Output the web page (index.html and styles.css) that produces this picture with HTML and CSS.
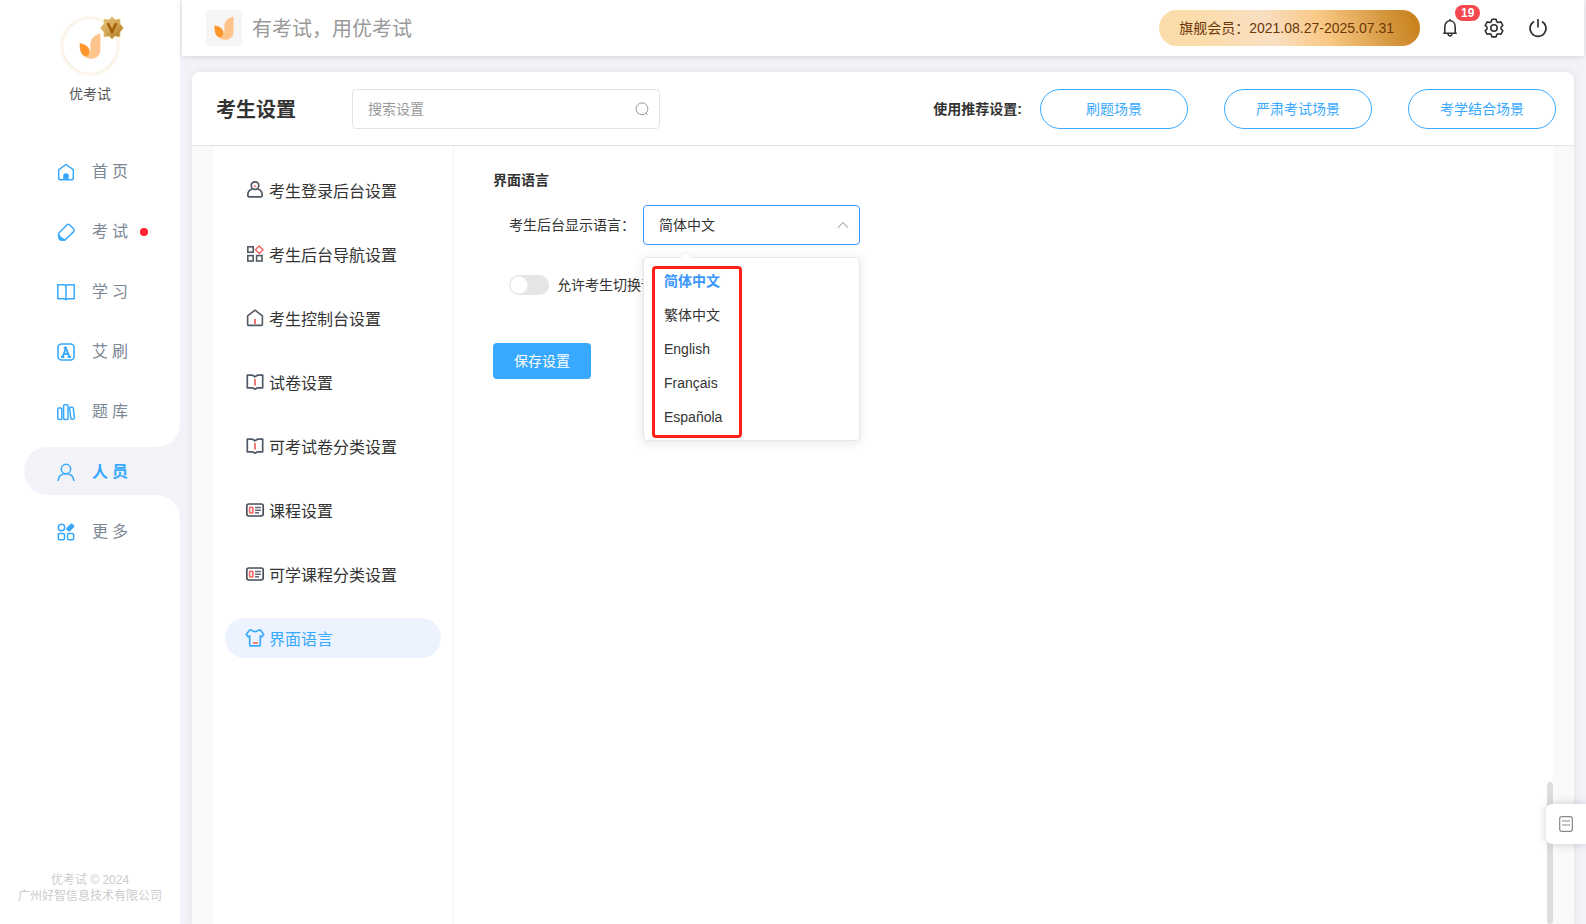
FILE: index.html
```html
<!DOCTYPE html>
<html lang="zh-CN">
<head>
<meta charset="utf-8">
<meta name="viewport" content="width=device-width, initial-scale=1">
<title>优考试 - 考生设置</title>
<link rel="stylesheet" href="styles.css">
</head>
<body>
<svg class="defs" aria-hidden="true">
  <symbol id="logo" viewBox="0 0 20 24">
    <path fill="#ffc48c" d="M19.600.4C13.500 2 10.300 5.500 10.300 11v5c0 3.500-2.500 5.500-5.800 5.300 1.700 1.700 3.800 2.500 6.500 2.500 5.300 0 8.600-3.400 8.600-8.800z"/>
    <path fill="#ff962c" d="M.5 9.500c5 .5 9.100 3.500 9.100 7.800 0 3.200-2.300 4.800-4.900 3.900C1.500 20 .3 15 .5 9.500z"/>
  </symbol>
  <symbol id="book" viewBox="0 0 18 18">
    <path fill="none" stroke="#515966" stroke-width="1.700" stroke-linejoin="round" d="M1.300 2.200h5.200L9 3.800l2.500-1.600h5.200v12.600h-5.200L9 16.200l-2.500-1.400H1.300z"/>
    <path stroke="#f0625d" stroke-width="1.700" d="M9 6v6.500"/>
  </symbol>
  <symbol id="card" viewBox="0 0 18 18">
    <rect x=".8" y="3" width="16.400" height="12" rx="2" fill="none" stroke="#454c59" stroke-width="1.700"/>
    <rect x="3.600" y="6.200" width="3.300" height="5.800" rx=".8" fill="none" stroke="#f0625d" stroke-width="1.600"/>
    <path d="M9 6.500h6M9 9.200h6M9 11.800h4" stroke="#656c78" stroke-width="1.400"/>
  </symbol>
</svg>
<div class="app">
  <aside class="sidebar">
    <div class="avatar">
      <svg class="avatar-logo"><use href="#logo"/></svg>
      <svg class="vip" viewBox="0 0 24 24">
        <defs><linearGradient id="gold" x1="0" y1="0" x2="1" y2="1"><stop offset="0" stop-color="#e6c583"/><stop offset=".5" stop-color="#d5a452"/><stop offset="1" stop-color="#a66d18"/></linearGradient></defs>
        <path fill="url(#gold)" stroke="#e5c47f" stroke-width=".8" stroke-linejoin="round" d="M12 .8l3 3.100 4.900-.8.100 4.600 3.400 4.300-3.400 4.300-.1 4.600-4.900-.8-3 3.100-3-3.100-4.900.8-.1-4.600L.6 12 4 7.700l.1-4.600 4.900.8z"/>
        <path fill="none" stroke="#a15d05" stroke-width="2.400" d="M7.800 7.200L12 16l4.200-8.800"/>
      </svg>
    </div>
    <div class="org">优考试</div>
    <nav class="menu" aria-label="主导航">
      <a class="menu-item" href="#home">
        <svg viewBox="0 0 20 20"><path fill="none" stroke="#38a9ff" stroke-width="1.500" stroke-linejoin="round" d="M10 2.500L2.700 7.600v8.400q0 1.800 1.800 1.800h11q1.800 0 1.800-1.800V7.600z"/><path fill="#38a9ff" d="M7.200 17.800V14a2.800 2.800 0 0 1 5.600 0v3.800z"/></svg>
        <span class="menu-text">首页</span></a>
      <a class="menu-item" href="#exam">
        <svg viewBox="0 0 20 20"><path fill="none" stroke="#38a9ff" stroke-width="1.500" stroke-linejoin="round" d="M3 11L10.800 3q1.500-1.400 3 0L17.700 7q1.200 1.300 0 2.600L9.600 17.500Q7 19 4 17.600 1.500 14 3 11z"/><path fill="#38a9ff" d="M2.800 10.500q.5 4.500 6.700 6.900-2.800 1.900-5.600.5Q1.200 14.500 2.800 10.500z"/></svg>
        <span class="menu-text">考试</span><i class="dot"></i></a>
      <a class="menu-item" href="#study">
        <svg viewBox="0 0 20 20"><path fill="none" stroke="#38a9ff" stroke-width="1.500" stroke-linejoin="round" d="M1.800 2.800h5.700q2 0 2.500 1 .5-1 2.500-1h5.700v14h-5.700q-2 0-2.500 1-.5-1-2.500-1H1.800zM10 3.800v14"/></svg>
        <span class="menu-text">学习</span></a>
      <a class="menu-item" href="#ai">
        <svg viewBox="0 0 20 20"><rect x="2" y="2" width="16" height="16" rx="3.500" fill="none" stroke="#38a9ff" stroke-width="1.600"/><path fill="none" stroke="#38a9ff" stroke-width="1.900" d="M6.500 15L10 6l3.500 9M7.500 12h5M5 15h3.300M11.700 15H15M7.800 5.800h2.700"/></svg>
        <span class="menu-text">艾刷</span></a>
      <a class="menu-item" href="#bank">
        <svg viewBox="0 0 20 20"><g fill="none" stroke="#38a9ff" stroke-width="1.500"><rect x="1.800" y="6" width="4" height="11.500" rx="1"/><rect x="7.600" y="2.800" width="4.400" height="14.700" rx="1"/><rect x="14.200" y="5.200" width="3.600" height="12" rx="1" transform="rotate(-7 16 11)"/></g></svg>
        <span class="menu-text">题库</span></a>
      <a class="menu-item active" href="#people" aria-current="page">
        <svg viewBox="0 0 20 20"><g fill="none" stroke="#38a9ff" stroke-width="1.500" stroke-linecap="round"><circle cx="10" cy="7" r="4.700"/><path d="M2.200 18.300c.5-4.200 3.600-6.500 7.800-6.500s7.300 2.300 7.800 6.500"/></g></svg>
        <span class="menu-text">人员</span></a>
      <a class="menu-item" href="#more">
        <svg viewBox="0 0 20 20"><g fill="none" stroke="#38a9ff" stroke-width="1.500"><circle cx="5.500" cy="5.500" r="3.200"/><rect x="2.300" y="11.500" width="6.200" height="6.200" rx="1.200"/><rect x="11.500" y="11.500" width="6.200" height="6.200" rx="1.200"/></g><rect x="10.200" y="3.200" width="8.200" height="4.800" rx="1.200" fill="#38a9ff" transform="rotate(-45 14.300 5.600)"/></svg>
        <span class="menu-text">更多</span></a>
    </nav>
    <footer class="copyright">优考试 © 2024<br>广州好智信息技术有限公司</footer>
  </aside>

  <div class="main">
    <header class="topbar">
      <span class="brand-logo"><svg><use href="#logo"/></svg></span>
      <span class="slogan">有考试，用优考试</span>
      <span class="member">旗舰会员：2021.08.27-2025.07.31</span>
      <div class="tools">
        <button class="tool" aria-label="通知">
          <svg viewBox="0 0 20 20"><g fill="none" stroke="#333" stroke-width="1.600" stroke-linejoin="round"><path d="M3.200 15.300h13.600M4.800 15.200V9C4.800 5.200 7 2.800 10 2.800s5.200 2.400 5.200 6.200v6.200M10 2.800V1"/><path d="M8 16q.3 1.900 2 1.900t2-1.900"/></g></svg>
          <span class="count">19</span>
        </button>
        <button class="tool" aria-label="设置">
          <svg viewBox="0 0 20 20"><g fill="none" stroke="#333" stroke-width="1.600" stroke-linejoin="round"><path d="M8 1.200h4l.8 2.500 1.400.8 2.600-.6 2 3.500-1.800 1.900v1.600l1.800 1.900-2 3.500-2.600-.6-1.400.8-.8 2.400H8l-.8-2.400-1.400-.8-2.600.6-2-3.500L3 10.900V9.300L1.200 7.400l2-3.500 2.600.6 1.400-.8z"/><circle cx="10" cy="10" r="3.200"/></g></svg>
        </button>
        <button class="tool" aria-label="退出">
          <svg viewBox="0 0 20 20"><path fill="none" stroke="#333" stroke-width="1.700" d="M10 1v8.500M6 3.400a8 8 0 1 0 8 0"/></svg>
        </button>
      </div>
    </header>

    <main class="panel">
      <div class="panel-head">
        <h1>考生设置</h1>
        <label class="search">
          <input type="text" placeholder="搜索设置" aria-label="搜索设置">
          <svg viewBox="0 0 14 14"><g fill="none" stroke="#999" stroke-width="1"><circle cx="7" cy="6.800" r="5.900"/><path d="M10.800 11l2 2"/></g></svg>
        </label>
        <div class="presets">
          <span class="presets-label">使用推荐设置:</span>
          <button class="preset">刷题场景</button>
          <button class="preset">严肃考试场景</button>
          <button class="preset">考学结合场景</button>
        </div>
      </div>
      <div class="panel-body">
        <nav class="subnav" aria-label="考生设置">
          <a href="#login"><svg viewBox="0 0 18 18"><g fill="none" stroke="#515966" stroke-width="1.700"><circle cx="9" cy="4.600" r="3.800"/><path stroke-linejoin="round" d="M6.500 8C3.300 8.700 1.800 11 1.800 14q0 1.900 1.500 1.900h11.400q1.500 0 1.500-1.900c0-3-1.500-5.300-4.700-6"/></g><path fill="#f0625d" d="M7.400 4.600h3.200Q10.400 6 9 6T7.400 4.600z"/></svg><span>考生登录后台设置</span></a>
          <a href="#navset"><svg viewBox="0 0 18 18"><g fill="none" stroke="#515966" stroke-width="1.600"><rect x="1.800" y="1.800" width="5.400" height="5.400"/><rect x="1.800" y="10.600" width="5.400" height="5.400"/><rect x="10.600" y="10.600" width="5.400" height="5.400"/></g><path fill="none" stroke="#f0625d" stroke-width="1.400" d="M13.200.9L17 4.700l-3.800 3.800-3.800-3.800z"/></svg><span>考生后台导航设置</span></a>
          <a href="#console"><svg viewBox="0 0 18 18"><path fill="none" stroke="#515966" stroke-width="1.600" stroke-linejoin="round" d="M9 1.200L1.600 6.800v8.600q0 1 1 1h12.800q1 0 1-1V6.800z"/><path stroke="#f0625d" stroke-width="1.800" d="M9 10v5"/></svg><span>考生控制台设置</span></a>
          <a href="#paper"><svg><use href="#book"/></svg><span>试卷设置</span></a>
          <a href="#papercat"><svg><use href="#book"/></svg><span>可考试卷分类设置</span></a>
          <a href="#course"><svg><use href="#card"/></svg><span>课程设置</span></a>
          <a href="#coursecat"><svg><use href="#card"/></svg><span>可学课程分类设置</span></a>
          <a class="current" href="#language"><svg viewBox="0 0 18 18"><path fill="none" stroke="#38a9ff" stroke-width="1.700" stroke-linejoin="round" d="M5.500 1.200Q9 4.200 12.500 1.200l1.500-.4 3.700 4.400-1.800 2.500-1.600-.8v9q0 1-1 1H4.700q-1 0-1-1v-9l-1.600.8L.3 5.200 4 .8z"/><path stroke="#f0625d" stroke-width="1.600" d="M7 14h5"/></svg><span>界面语言</span></a>
        </nav>
        <form class="form">
          <h2>界面语言</h2>
          <div class="field">
            <label for="lang">考生后台显示语言：</label>
            <div class="picker">
              <select id="lang">
                <option>简体中文</option><option>繁体中文</option><option>English</option><option>Français</option><option>Española</option>
              </select>
              <svg class="chevron" viewBox="0 0 12 8"><path fill="none" stroke="#b5b5b5" stroke-width="1.200" d="M.8 6.800L6 1.500l5.200 5.300"/></svg>
              <div class="dropdown">
                <button type="button" class="selected">简体中文</button>
                <button type="button">繁体中文</button>
                <button type="button">English</button>
                <button type="button">Français</button>
                <button type="button">Española</button>
                <div class="marker"></div>
              </div>
            </div>
          </div>
          <label class="toggle"><input type="checkbox" role="switch">允许考生切换语言</label>
          <button type="button" class="save">保存设置</button>
        </form>
        <div class="scroll-thumb"></div>
      </div>
    </main>
  </div>
  <button class="float" aria-label="反馈">
    <svg viewBox="0 0 14 16"><rect x=".7" y=".7" width="12.600" height="14.600" rx="2" fill="none" stroke="#888" stroke-width="1.200"/><path d="M3 5h8M3 9h8" stroke="#888" stroke-width="1.200"/></svg>
  </button>
</div>
</body>
</html>
```
FILE: styles.css
```css
* { box-sizing: border-box; }

body {
  margin: 0;
  background: #f2f3f8;
  color: #333;
  font: 14px/20px "Liberation Sans", "Noto Sans CJK SC", sans-serif;
}

button, input, select { font: inherit; color: inherit; }
button { border: 0; padding: 0; background: none; cursor: pointer; }
a { color: inherit; text-decoration: none; }
h1, h2 { margin: 0; }
.defs { position: absolute; width: 0; height: 0; }

.app {
  display: grid;
  grid-template-columns: 180px minmax(0, 1fr);
  height: 100vh;
  overflow: hidden;
}

/* Sidebar */
.sidebar {
  display: flex;
  flex-direction: column;
  padding: 16px 0 20px;
  background: #fff;
}

.avatar {
  position: relative;
  display: grid;
  place-items: center;
  align-self: center;
  width: 60px;
  height: 60px;
  border: 2px solid #fcf7ef;
  border-radius: 50%;
  box-shadow: inset 0 0 0 1px #f8ead4;
}

.avatar-logo { width: 22px; height: 26px; }
.vip { position: absolute; top: -2px; right: -6px; width: 24px; height: 24px; }
.org { margin-top: 8px; color: #555; text-align: center; }

.menu {
  display: flex;
  flex-direction: column;
  gap: 12px;
  margin: 43px 0 0 24px;
}

.menu-item {
  position: relative;
  display: flex;
  align-items: center;
  height: 48px;
  padding: 2px 0 0 32px;
  color: #7b8794;
  font-size: 16px;
}

.menu-item svg { width: 20px; height: 20px; margin-right: 16px; }
.menu-text { letter-spacing: 4px; }
.dot { width: 8px; height: 8px; margin-left: 8px; border-radius: 50%; background: #ff1f28; }

.menu-item.active {
  border-radius: 24px 0 0 24px;
  background: #f2f3f8;
  color: #38a9ff;
  font-weight: 700;
}

.menu-item.active::before,
.menu-item.active::after {
  content: "";
  position: absolute;
  right: 0;
  width: 22px;
  height: 22px;
}

.menu-item.active::before {
  bottom: 100%;
  background: radial-gradient(circle at 0 0, #fff 21px, #f2f3f8 22px);
}

.menu-item.active::after {
  top: 100%;
  background: radial-gradient(circle at 0 100%, #fff 21px, #f2f3f8 22px);
}

.copyright {
  margin-top: auto;
  color: #ccc;
  font-size: 12px;
  line-height: 16px;
  text-align: center;
}

/* Top bar */
.main { display: flex; flex-direction: column; min-height: 0; }

.topbar {
  display: flex;
  align-items: center;
  flex: none;
  height: 56px;
  margin: 0 2px;
  padding: 0 36px 0 24px;
  background: #fff;
  box-shadow: 0 1px 6px rgba(0, 21, 41, .12);
}

.brand-logo {
  display: grid;
  place-items: center;
  width: 36px;
  height: 36px;
  background: #f5f5f5;
}

.brand-logo svg { width: 20px; height: 24px; }
.slogan { margin-left: 10px; padding-top: 2px; color: #999; font-size: 20px; line-height: 28px; }

.member {
  margin-left: auto;
  padding: 0 26px 0 20px;
  border-radius: 18px;
  background: linear-gradient(70deg, #fadcaa 0%, #fbdcab 18%, #f9dfc3 42%, #f9c985 62%, #d5973f 86%, #c77c14 100%);
  color: #6d3708;
  line-height: 36px;
}

.tools { display: flex; gap: 24px; margin-left: 20px; }
.tool { position: relative; width: 20px; height: 20px; }
.tool svg { display: block; width: 20px; height: 20px; }

.count {
  position: absolute;
  top: -13px;
  left: 15px;
  padding: 0 6px;
  border-radius: 8px;
  background: #f5484e;
  color: #fff;
  font-size: 12px;
  font-weight: 700;
  line-height: 16px;
}

/* Panel */
.panel {
  display: flex;
  flex: 1;
  flex-direction: column;
  min-height: 0;
  margin: 16px 12px 0;
  border-radius: 8px 8px 0 0;
  background: #fff;
  box-shadow: 0 0 8px rgba(0, 21, 41, .08);
}

.panel-head {
  display: flex;
  align-items: center;
  height: 74px;
  padding: 0 18px 0 24px;
  border-bottom: 1px solid #e4e4e6;
}

.panel-head h1 { padding-top: 2px; font-size: 20px; line-height: 28px; }

.search {
  display: flex;
  align-items: center;
  width: 308px;
  height: 40px;
  margin-left: 56px;
  padding: 0 10px 0 15px;
  border: 1px solid #e4e4e4;
  border-radius: 4px;
}

.search input { flex: 1; min-width: 0; padding: 0; border: 0; outline: 0; background: none; }
.search input::placeholder { color: #999; opacity: 1; }
.search svg { width: 14px; height: 14px; }

.presets { display: flex; align-items: center; gap: 36px; margin-left: auto; }
.presets-label { margin-right: -18px; font-weight: 700; }

.preset {
  width: 148px;
  height: 40px;
  border: 1px solid #38a9ff;
  border-radius: 20px;
  color: #38a9ff;
}

.panel-body {
  position: relative;
  display: flex;
  flex: 1;
  min-height: 0;
  margin: 0 21px;
  box-shadow: -21px 0 #f9f9fa, 21px 0 #f9f9fa;
}

.subnav {
  display: flex;
  flex-direction: column;
  gap: 24px;
  width: 241px;
  padding: 24px 12px;
  border-right: 1px solid #f5f5f7;
}

.subnav a {
  display: flex;
  align-items: center;
  gap: 5px;
  height: 40px;
  padding-left: 21px;
  border-radius: 20px;
  font-size: 16px;
}

.subnav svg { width: 18px; height: 18px; overflow: visible; }
.subnav span { padding-top: 3px; }
.subnav .current { background: #ecf3ff; color: #38a9ff; }

/* Form */
.form { flex: 1; padding: 24px 39px; }
.form h2 { font-size: 14px; line-height: 20px; }
.field { display: flex; align-items: center; gap: 8px; margin: 15px 0 0 16px; }
.picker { position: relative; width: 217px; }

.picker select {
  display: block;
  width: 100%;
  height: 40px;
  padding: 0 15px;
  border: 1px solid #3a97ff;
  border-radius: 4px;
  outline: 0;
  background: #fff;
  appearance: none;
}

.chevron { position: absolute; top: 16px; right: 11px; width: 12px; height: 8px; }

.dropdown {
  position: absolute;
  z-index: 1;
  top: 52px;
  left: 0;
  display: flex;
  flex-direction: column;
  width: 100%;
  padding: 6px 0;
  border: 1px solid #e4e7ed;
  border-radius: 4px;
  background: #fff;
  box-shadow: 0 2px 12px rgba(0, 0, 0, .1);
}

.dropdown::before {
  content: "";
  position: absolute;
  top: -5px;
  left: 37px;
  width: 8px;
  height: 8px;
  border: solid #ebeef5;
  border-width: 1px 0 0 1px;
  background: #fff;
  transform: rotate(45deg);
}

.dropdown button { height: 34px; padding: 0 20px; text-align: left; }
.dropdown .selected { color: #3a97ff; font-weight: 700; }

.marker {
  position: absolute;
  top: 8px;
  left: 8px;
  width: 90px;
  height: 172px;
  border: 3px solid #ff2018;
  border-radius: 4px;
  pointer-events: none;
}

.toggle { display: flex; align-items: center; gap: 8px; margin: 30px 0 0 16px; }

.toggle input {
  width: 40px;
  height: 20px;
  margin: 0;
  border-radius: 10px;
  background: radial-gradient(circle at 10px 10px, #fff 8px, #e5e5e5 9px);
  appearance: none;
}

.save {
  width: 98px;
  height: 36px;
  margin-top: 48px;
  border-radius: 4px;
  background: #38a9ff;
  color: #fff;
}

.scroll-thumb {
  position: absolute;
  right: 0;
  bottom: 0;
  width: 6px;
  height: 142px;
  border-radius: 3px;
  background: #dcdddf;
}

.float {
  position: fixed;
  right: 0;
  bottom: 80px;
  display: grid;
  place-items: center;
  width: 40px;
  height: 40px;
  border-radius: 6px 0 0 6px;
  background: #fff;
  box-shadow: 0 0 10px rgba(0, 0, 0, .18);
}

.float svg { width: 14px; height: 16px; }
```
